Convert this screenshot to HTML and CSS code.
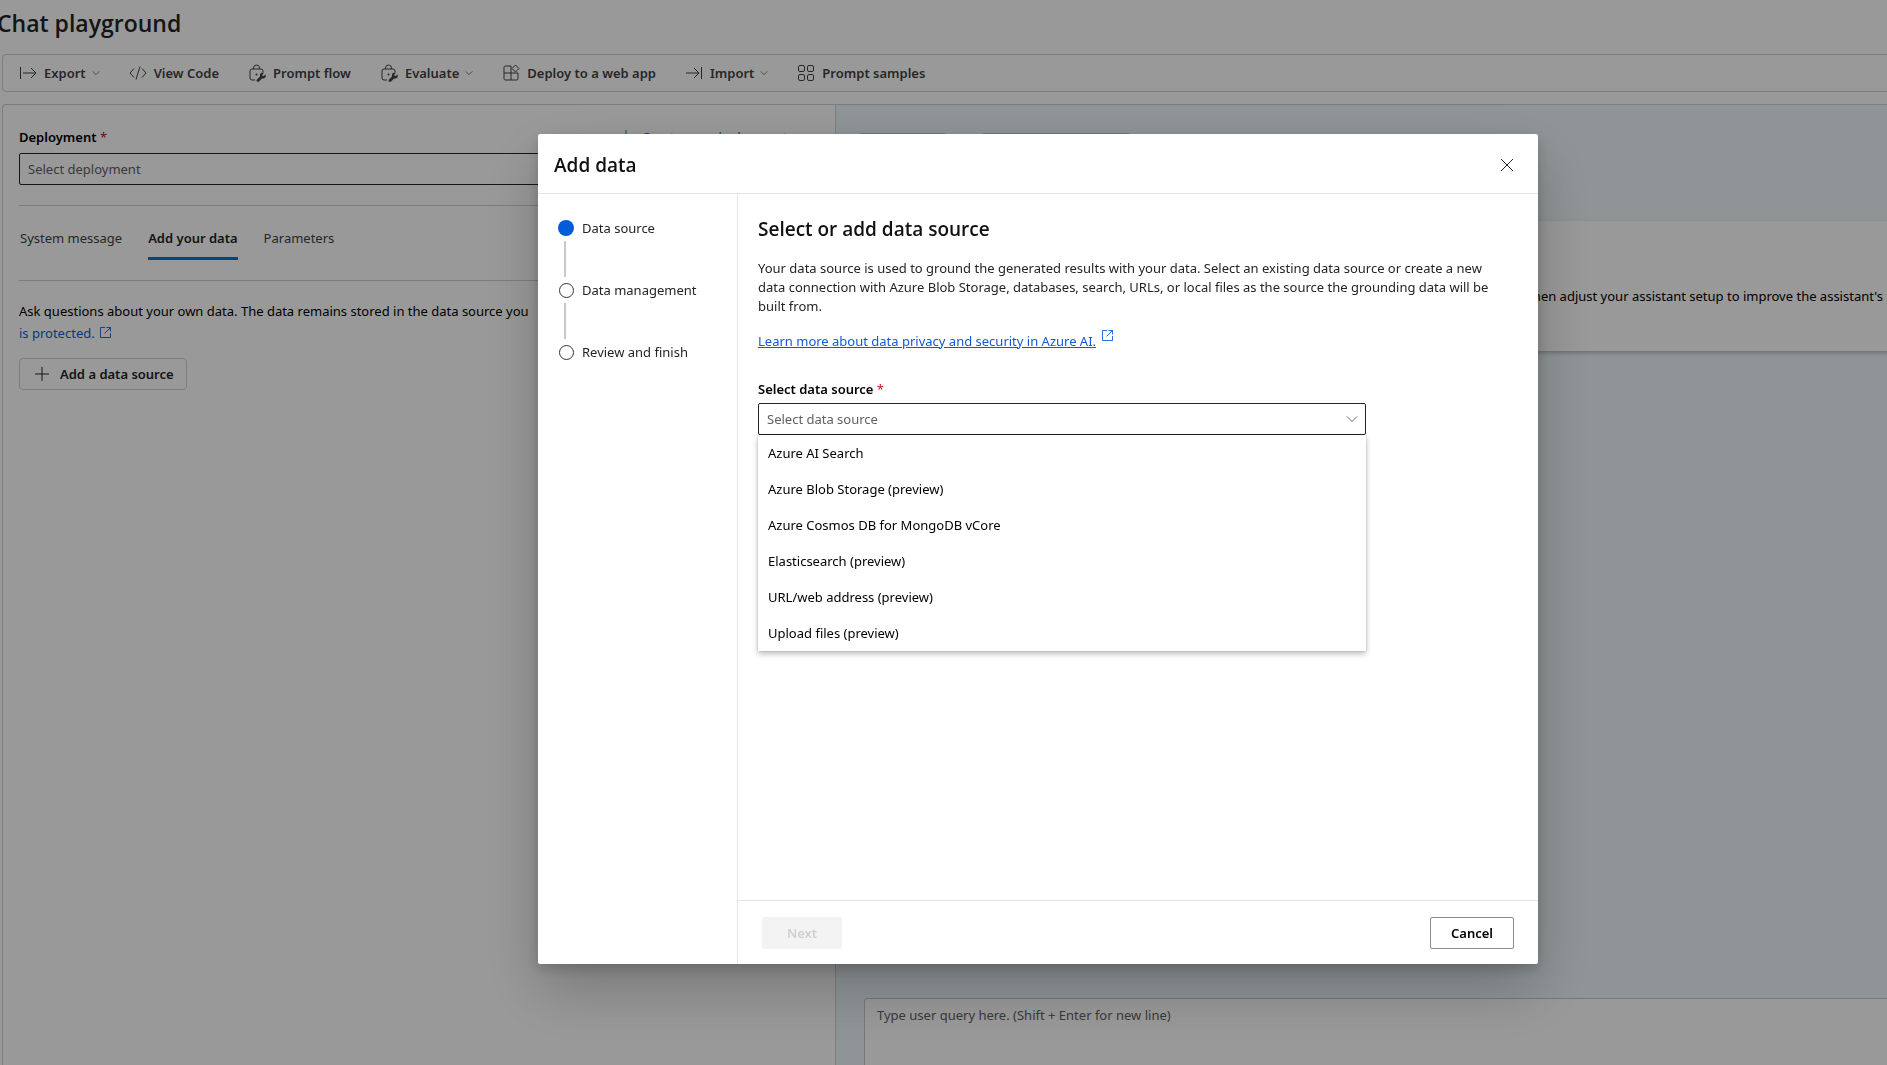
FILE: index.html
```html
<!DOCTYPE html>
<html lang="en">
<head>
  <meta charset="UTF-8">
  <title>Chat playground</title>
  <link rel="stylesheet" href="styles.css">
</head>
<body>
  <!-- shared icons -->
  <svg class="sprite" aria-hidden="true">
    <symbol id="i-export" viewBox="0 0 18 18"><path d="M1.500 3v12M4 9h13M12 4l5 5-5 5"/></symbol>
    <symbol id="i-import" viewBox="0 0 18 18"><path d="M16.500 3v12M1 9h13M9 4l5 5-5 5"/></symbol>
    <symbol id="i-code" viewBox="0 0 18 18"><path d="M5 4.500L1 9l4 4.500M13 4.500L17 9l-4 4.500M11 2.500l-4 13"/></symbol>
    <symbol id="i-flow" viewBox="0 0 18 18">
      <path d="M7 16H4a2 2 0 0 1-2-2V7a2 2 0 0 1 2-2h9a2 2 0 0 1 2 2v1M5.500 5V4a3 3 0 0 1 6 0v1"/>
      <circle class="fill" cx="8.500" cy="10.500" r="1"/>
      <path class="fill" d="M16 8.800l-2 2.200 1.300 1.300 2.300-1.800c.9 2.500-1.200 4.500-3.600 3.900l-3 3c-1.400 1.300-3.400-.6-2-2l3-3c-.7-2.500 1.500-4.600 4-3.600z"/>
    </symbol>
    <symbol id="i-app" viewBox="0 0 18 18">
      <path d="M9 2H3.500A1.500 1.500 0 0 0 2 3.500v11A1.500 1.500 0 0 0 3.500 16h11a1.500 1.500 0 0 0 1.500-1.500V9M2 9h14M9 2v14M13.500 1L17 4.500 13.500 8 10 4.500z"/>
    </symbol>
    <symbol id="i-grid" viewBox="0 0 18 18">
      <rect x="1.500" y="1.500" width="6" height="6" rx="1.500"/><rect x="10.500" y="1.500" width="6" height="6" rx="1.500"/>
      <rect x="1.500" y="10.500" width="6" height="6" rx="1.500"/><rect x="10.500" y="10.500" width="6" height="6" rx="1.500"/>
    </symbol>
    <symbol id="i-chevron" viewBox="0 0 12 12"><path d="M1 3.500l5 5 5-5"/></symbol>
    <symbol id="i-plus" viewBox="0 0 16 16"><path d="M8 1v14M1 8h14"/></symbol>
    <symbol id="i-open" viewBox="0 0 12 12"><path d="M5.500.5H.5v11h11V6.500M7 .5h4.500V5M11.500.5L5 7"/></symbol>
    <symbol id="i-close" viewBox="0 0 14 14"><path d="M1 1l12 12M13 1L1 13"/></symbol>
  </svg>

  <main class="app">
    <h1>Chat playground</h1>

    <nav class="toolbar">
      <button><svg class="icon"><use href="#i-export"/></svg>Export<svg class="chev"><use href="#i-chevron"/></svg></button>
      <button><svg class="icon"><use href="#i-code"/></svg>View Code</button>
      <button><svg class="icon"><use href="#i-flow"/></svg>Prompt flow</button>
      <button><svg class="icon"><use href="#i-flow"/></svg>Evaluate<svg class="chev"><use href="#i-chevron"/></svg></button>
      <button><svg class="icon"><use href="#i-app"/></svg>Deploy to a web app</button>
      <button><svg class="icon"><use href="#i-import"/></svg>Import<svg class="chev"><use href="#i-chevron"/></svg></button>
      <button><svg class="icon"><use href="#i-grid"/></svg>Prompt samples</button>
    </nav>

    <div class="workspace">
      <section class="setup">
        <div class="field-head">
          <label class="label" for="deployment">Deployment <span class="req">*</span></label>
          <a class="create" href="#"><svg class="plus"><use href="#i-plus"/></svg>Create new deployment</a>
        </div>
        <select id="deployment" class="select">
          <option>Select deployment</option>
        </select>

        <div class="tabs" role="tablist">
          <button role="tab">System message</button>
          <button role="tab" class="active" aria-selected="true">Add your data</button>
          <button role="tab">Parameters</button>
        </div>

        <p class="hint">Ask questions about your own data. The data remains stored in the data source you&emsp;designate. <a href="#">Learn how your data<br>is protected. <svg class="open"><use href="#i-open"/></svg></a></p>
        <button class="add-source"><svg class="plus"><use href="#i-plus"/></svg>Add a data source</button>
      </section>

      <section class="chat">
        <div class="chat-actions">
          <button>Clear chat</button>
          <button>Playground settings</button>
        </div>
        <div class="chat-card">
          <p>Test your assistant by sending queries below. Then adjust your assistant setup to improve the assistant's responses.</p>
        </div>
        <textarea class="query" aria-label="User query" placeholder="Type user query here. (Shift + Enter for new line)"></textarea>
      </section>
    </div>
  </main>

  <div class="overlay">
    <div class="dialog" role="dialog" aria-labelledby="dialogTitle">
      <header class="dialog-head">
        <h2 id="dialogTitle">Add data</h2>
        <button class="close" aria-label="Close"><svg><use href="#i-close"/></svg></button>
      </header>
      <div class="dialog-body">
        <ol class="steps">
          <li class="current">Data source</li>
          <li>Data management</li>
          <li>Review and finish</li>
        </ol>
        <div class="pane">
          <div class="content">
            <h2>Select or add data source</h2>
            <p>Your data source is used to ground the generated results with your data. Select an existing data source or create a new data connection with Azure Blob Storage, databases, search, URLs, or local files as the source the grounding data will be built from.</p>
            <p class="learn"><a href="#">Learn more about data privacy and security in Azure AI.</a><svg class="open"><use href="#i-open"/></svg></p>
            <label class="label" for="source">Select data source <span class="req">*</span></label>
            <div class="combo">
              <select id="source" class="select">
                <option>Select data source</option>
              </select>
              <svg class="combo-chev"><use href="#i-chevron"/></svg>
              <ul class="menu" role="listbox">
                <li role="option">Azure AI Search</li>
                <li role="option">Azure Blob Storage (preview)</li>
                <li role="option">Azure Cosmos DB for MongoDB vCore</li>
                <li role="option">Elasticsearch (preview)</li>
                <li role="option">URL/web address (preview)</li>
                <li role="option">Upload files (preview)</li>
              </ul>
            </div>
          </div>
          <footer class="dialog-foot">
            <button class="next" disabled>Next</button>
            <button class="cancel">Cancel</button>
          </footer>
        </div>
      </div>
    </div>
  </div>
</body>
</html>
```

FILE: styles.css
```css
* { box-sizing: border-box; }
body {
  margin: 0;
  font-family: 'Segoe UI', 'Noto Sans', sans-serif;
  font-size: 13px;
  line-height: 20px;
  color: #242424;
  background: #fff;
  overflow: hidden;
}
h1, h2, p, ol, ul { margin: 0; padding: 0; }
h1, h2 { font-family: 'Segoe UI', 'Open Sans', sans-serif; }
button, select, textarea { font: inherit; color: inherit; }
button {
  border: 0;
  background: none;
  padding: 0;
  white-space: nowrap;
}
a { color: #0f5bd7; text-decoration: none; }
svg {
  flex: none;
  fill: none;
  stroke: currentColor;
  overflow: visible;
}
.fill { fill: currentColor; stroke: none; }
.sprite { display: none; }

/* page */
.app {
  display: flex;
  flex-direction: column;
  height: 100vh;
  margin-right: -24px;
}
h1 {
  font-size: 23px;
  line-height: 32px;
  font-weight: 600;
  padding: 7px 0 15px;
  margin-left: -3px;
}
.toolbar {
  display: flex;
  gap: 29px;
  height: 38px;
  margin-left: 2px;
  padding-left: 16px;
  border: 1px solid #d1d1d1;
  border-radius: 4px;
}
.toolbar button {
  display: flex;
  align-items: center;
  font-weight: 600;
  color: #424242;
}
.icon { width: 18px; height: 18px; margin-right: 7px; }
.chev { width: 8px; height: 8px; margin-left: 6px; }
.workspace {
  display: flex;
  flex: 1;
  margin: 12px 0 0 2px;
  border: 1px solid #d1d1d1;
  border-bottom: 0;
  border-radius: 4px 0 0 0;
}
.setup { flex: 0 0 832px; padding: 22px 16px; }
.field-head { display: flex; justify-content: space-between; }
.label { font-weight: 600; color: #000; }
.req { color: #c50f1f; font-weight: 400; }
.create {
  display: flex;
  align-items: center;
  gap: 8px;
  margin-right: 32px;
  color: #0078d4;
}
.plus { width: 16px; height: 16px; }
.select {
  display: block;
  appearance: none;
  width: 100%;
  height: 32px;
  margin-top: 6px;
  padding: 0 8px;
  border: 1px solid #242424;
  border-radius: 2px;
  background: #fff;
  color: #616161;
}
.tabs {
  display: flex;
  gap: 26px;
  margin-top: 20px;
  padding: 18px 0 20px 1px;
  border: 1px solid #d1d1d1;
  border-width: 1px 0;
}
.tabs button {
  height: 36px;
  padding-bottom: 6px;
  border-bottom: 3px solid transparent;
  color: #424242;
}
.tabs .active {
  border-color: #0078d4;
  font-weight: 600;
  color: #242424;
}
.hint {
  margin-top: 19px;
  line-height: 22px;
  color: #000;
  white-space: nowrap;
}
.open { width: 11px; height: 11px; color: #0f5bd7; }
.hint .open { margin-left: 2px; }
.add-source {
  display: flex;
  align-items: center;
  gap: 10px;
  height: 32px;
  margin-top: 14px;
  padding: 0 12px 0 14px;
  border: 1px solid #d1d1d1;
  border-radius: 4px;
  font-weight: 600;
}
.chat {
  display: flex;
  flex-direction: column;
  flex: 1;
  min-width: 0;
  padding: 28px 0 0 21px;
  border-left: 1px solid #d1d1d1;
  background: #eef7fb;
}
.chat-actions { display: flex; gap: 32px; }
.chat-actions button {
  height: 32px;
  padding: 0 14px;
  border: 1px solid #c7c7c7;
  border-radius: 4px;
}
.chat-card {
  height: 130px;
  margin-top: 56px;
  padding: 65px 0 0 390px;
  background: #fff;
  box-shadow: 0 2px 4px rgba(0, 0, 0, 0.25);
  color: #000;
  white-space: nowrap;
}
.query {
  height: 67px;
  margin: auto 0 0 7px;
  padding: 6px 12px;
  border: 1px solid #c7c7c7;
  border-bottom: 0;
  border-radius: 4px 0 0 0;
  resize: none;
  background: #fff;
}
.query::placeholder { color: #616161; }

.overlay {
  position: fixed;
  inset: 0;
  display: flex;
  align-items: center;
  justify-content: center;
  padding: 33px 0 0 189px;
  background: rgba(0, 0, 0, 0.4);
}
.dialog {
  display: flex;
  flex-direction: column;
  width: 100%;
  max-width: 1000px;
  min-height: 78vh;
  border-radius: 2px;
  background: #fff;
  box-shadow: 0 26px 58px rgba(0, 0, 0, 0.22), 0 5px 14px rgba(0, 0, 0, 0.18);
}
.dialog-head {
  display: flex;
  align-items: center;
  justify-content: space-between;
  height: 60px;
  padding: 4px 24px 0 16px;
  border-bottom: 1px solid #e5e5e5;
}
h2 {
  font-size: 19px;
  line-height: 28px;
  font-weight: 600;
  color: #111;
}
.close { display: flex; }
.close svg { width: 14px; height: 14px; }
.dialog-body { display: flex; flex: 1; }
.steps {
  flex: 0 0 200px;
  padding: 24px 20px;
  border-right: 1px solid #e5e5e5;
  list-style: none;
}
.steps li {
  position: relative;
  height: 62px;
  padding-left: 24px;
}
.steps li::before {
  content: '';
  position: absolute;
  left: 1px;
  top: 3px;
  width: 13px;
  height: 13px;
  border: 1px solid #333;
  border-radius: 50%;
}
.steps .current::before {
  left: 0;
  top: 2px;
  width: 16px;
  height: 16px;
  border: 0;
  background: #015cda;
}
.steps li:not(:last-child)::after {
  content: '';
  position: absolute;
  left: 6px;
  top: 23px;
  width: 2px;
  height: 36px;
  background: #c8c8c8;
}
.pane { display: flex; flex: 1; flex-direction: column; }
.content { flex: 1; padding: 21px 40px 20px 20px; }
.content p { margin-top: 16px; line-height: 19px; }
.content .learn { display: flex; gap: 6px; margin-bottom: 28px; }
.learn a { text-decoration: underline; }
.learn .open { margin-top: -2px; }
.combo { position: relative; max-width: 608px; }
.combo .select { margin-top: 4px; }
.combo-chev {
  position: absolute;
  right: 8px;
  top: 10px;
  width: 12px;
  height: 12px;
  color: #666;
}
.menu {
  position: absolute;
  left: 0;
  right: 0;
  top: 32px;
  background: #fff;
  box-shadow: 0 3px 6px rgba(0, 0, 0, 0.25), 0 0 2px rgba(0, 0, 0, 0.2);
  list-style: none;
  color: #000;
}
.menu li { padding: 8px 10px; }
.dialog-foot {
  display: flex;
  justify-content: space-between;
  height: 64px;
  padding: 16px 24px 0;
  border-top: 1px solid #e5e5e5;
}
.dialog-foot button {
  height: 32px;
  border-radius: 2px;
  font-weight: 600;
}
.next { min-width: 80px; background: #f3f3f3; color: #d0d0d0; }
.cancel { min-width: 84px; border: 1px solid #8a8a8a; color: #000; }
```
